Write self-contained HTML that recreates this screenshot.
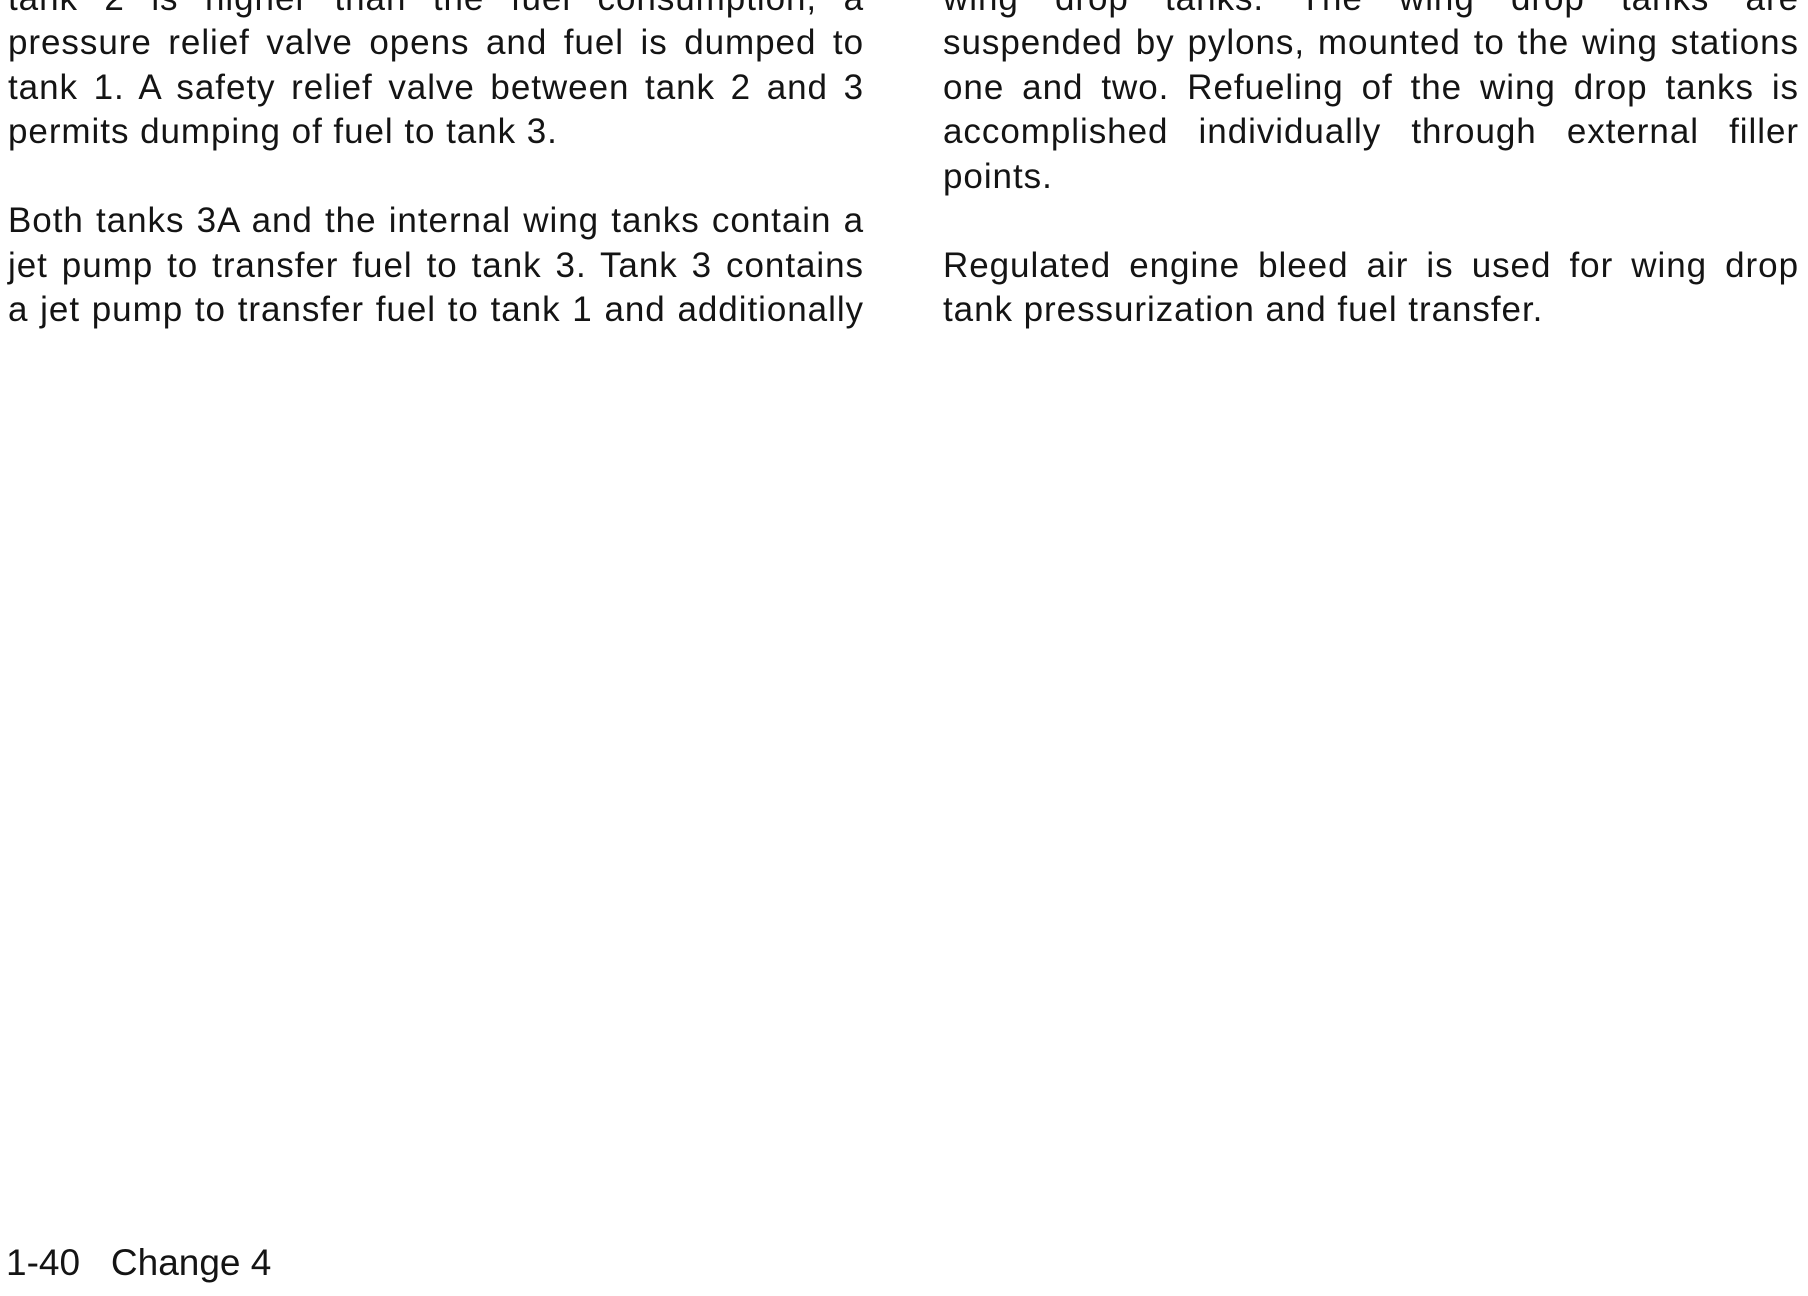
<!DOCTYPE html>
<html><head><meta charset="utf-8"><style>
html,body{margin:0;padding:0;background:#fff;}
body{width:1808px;height:1296px;position:relative;overflow:hidden;font-family:"Liberation Sans",Arial,sans-serif;color:#141414;}
.l{position:absolute;font-size:35px;letter-spacing:0.95px;line-height:44.5px;height:44.5px;white-space:nowrap;text-align:justify;text-align-last:justify;}
.n{text-align-last:left;}
.a{left:8px;width:856px;}
.b{left:943px;width:856px;}
.f{position:absolute;left:6px;top:1241px;font-size:37px;line-height:44px;white-space:pre;}
</style></head><body>
<div class="l a" style="top:-23.5px">tank 2 is higher than the fuel consumption, a</div>
<div class="l a" style="top:21px">pressure relief valve opens and fuel is dumped to</div>
<div class="l a" style="top:65.5px">tank 1. A safety relief valve between tank 2 and 3</div>
<div class="l a n" style="top:110px">permits dumping of fuel to tank 3.</div>
<div class="l a" style="top:199px">Both tanks 3A and the internal wing tanks contain a</div>
<div class="l a" style="top:243.5px">jet pump to transfer fuel to tank 3. Tank 3 contains</div>
<div class="l a" style="top:288px">a jet pump to transfer fuel to tank 1 and additionally</div>

<div class="l b" style="top:-23.5px">wing drop tanks. The wing drop tanks are</div>
<div class="l b" style="top:21px">suspended by pylons, mounted to the wing stations</div>
<div class="l b" style="top:65.5px">one and two. Refueling of the wing drop tanks is</div>
<div class="l b" style="top:110px">accomplished individually through external filler</div>
<div class="l b n" style="top:154.5px">points.</div>
<div class="l b" style="top:243.5px">Regulated engine bleed air is used for wing drop</div>
<div class="l b n" style="top:288px">tank pressurization and fuel transfer.</div>

<div class="f">1-40   Change 4</div>
</body></html>
